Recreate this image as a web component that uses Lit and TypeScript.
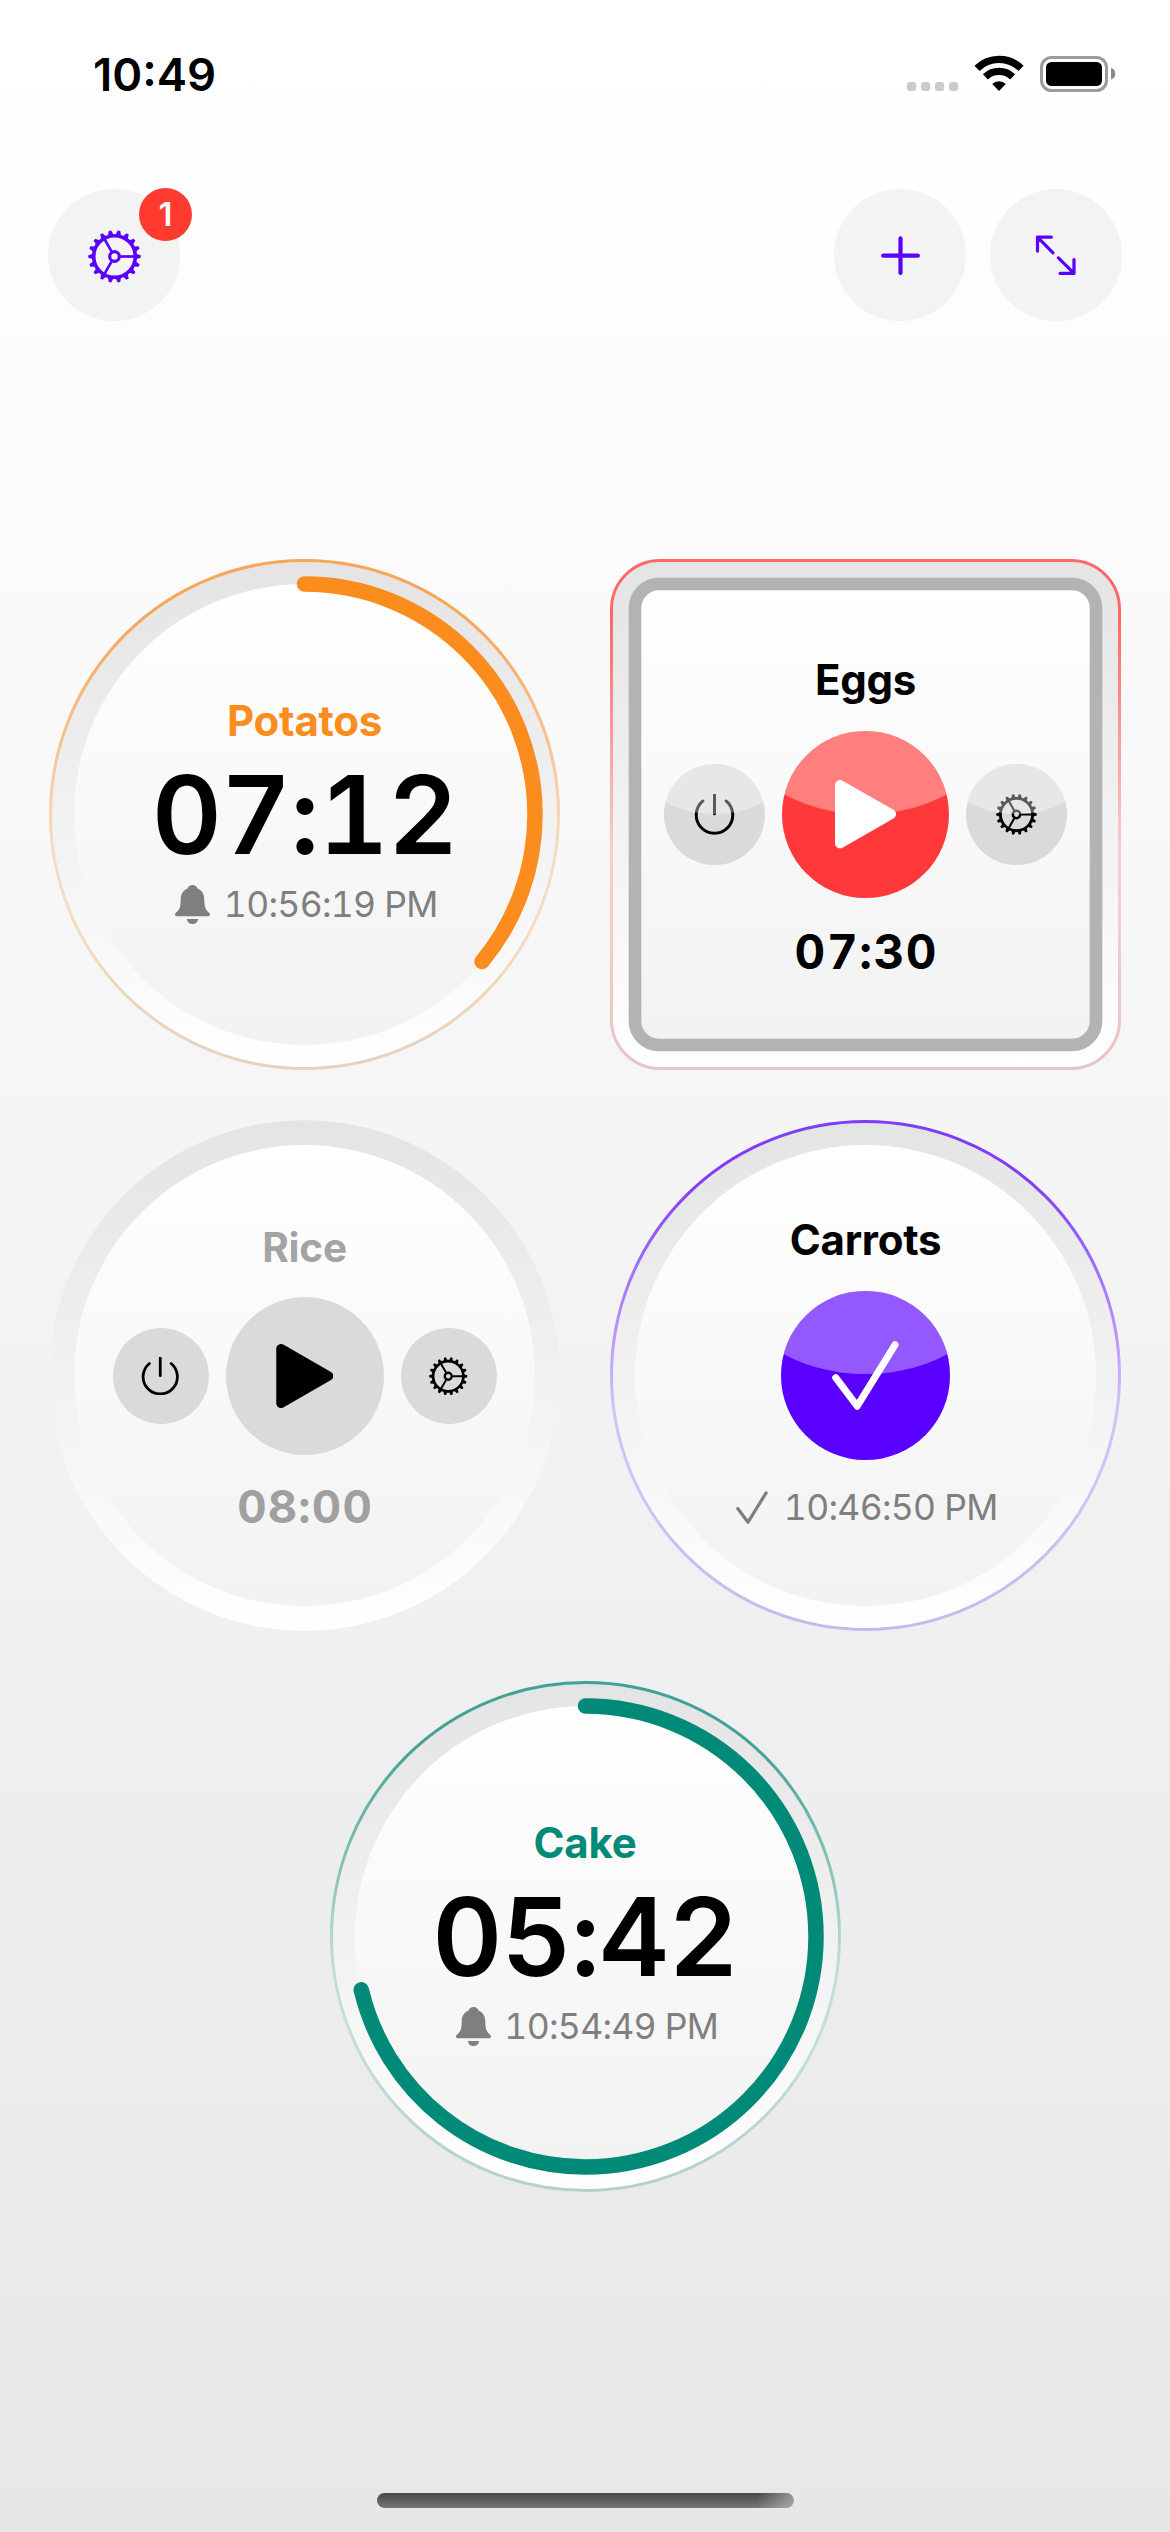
import { LitElement, html, css, svg, nothing } from "lit";
import { customElement, property } from "lit/decorators.js";

type Mode = "running" | "paused" | "idle" | "done";

interface Timer {
  name: string;
  mode: Mode;
  shape: "circle" | "square";
  color?: string;
  rim?: [string, string, string];
  time?: string;
  clock?: string;
  progress?: number;
}

const TIMERS: Timer[] = [
  { name: "Potatos", mode: "running", shape: "circle", color: "#fb8c1e", rim: ["#f9a556", "#f6dcc1", "#e5d1bd"], time: "07:12", clock: "10:56:19 PM", progress: 0.36 },
  { name: "Eggs", mode: "paused", shape: "square", color: "#ff3939", rim: ["#ff6868", "#f6cccc", "#e8c3c3"], time: "07:30" },
  { name: "Rice", mode: "idle", shape: "circle", time: "08:00" },
  { name: "Carrots", mode: "done", shape: "circle", color: "#5900ff", rim: ["#7f3cfa", "#d3c1f9", "#c8b8ea"], clock: "10:46:50 PM" },
  { name: "Cake", mode: "running", shape: "circle", color: "#028a78", rim: ["#40a294", "#c0deda", "#b5d0cc"], time: "05:42", clock: "10:54:49 PM", progress: 0.7125 },
];

const TEETH = Array.from({ length: 18 }, (_, i) => i * 20);

const gearIcon = () => html`<svg class="icon" viewBox="-26.5 -26.5 53 53" fill="none" stroke="currentColor">
  <circle r="20.8" stroke-width="3.6"></circle>
  <circle r="4.8" stroke-width="3.2"></circle>
  ${[0, 120, 240].map((a) => svg`<line x1="6" y1="0" x2="20" y2="0" stroke-width="2.7" transform="rotate(${a})"></line>`)}
  ${TEETH.map((a) => svg`<path d="M21.5-2.8L26.2-1.3V1.3L21.5 2.8Z" fill="currentColor" stroke="none" transform="rotate(${a})"></path>`)}
</svg>`;

const powerIcon = () => html`<svg class="icon" viewBox="-20 -20 40 40" fill="none" stroke="currentColor" stroke-width="2.9" stroke-linecap="round">
  <path d="M-11.3-13.2A17.8 17.8 0 1 0 11.3-13.2M0-18.9V-.6"></path>
</svg>`;

const playIcon = () => html`<svg class="icon" viewBox="0 0 61 68.4">
  <path d="M5 5V63.4L56 34.2Z" fill="currentColor" stroke="currentColor" stroke-width="10" stroke-linejoin="round"></path>
</svg>`;

const checkIcon = (w: number) => html`<svg class="icon" viewBox="0 0 67 69" fill="none" stroke="currentColor" stroke-width=${w} stroke-linecap="round" stroke-linejoin="round">
  <path d="M3.7 36.7L25.2 65.2L63 3.8"></path>
</svg>`;

const bellIcon = () => html`<svg class="icon" viewBox="0 0 35 39" fill="currentColor">
  <path d="M17.5 0C20 0 21.8 1.3 22.4 3.4C27 5.2 29.3 9 29.3 14.5C29.5 21.5 30 24 33.3 27C34.8 28.3 35 29 35 29.800C35 30.7 34.4 31.2 33.4 31.2H1.6C.6 31.2 0 30.7 0 29.8C0 29 .2 28.3 1.7 27C5 24 5.5 21.5 5.7 14.5C5.7 9 8 5.2 12.6 3.4C13.2 1.3 15 0 17.5 0ZM11.8 34H23.2C22.8 37 20.5 39 17.5 39S12.2 37 11.8 34Z"></path>
</svg>`;

@customElement("round-button")
class RoundButton extends LitElement {
  @property({ type: Boolean }) glossy = false;

  static styles = css`
    :host {
      display: block;
      flex: none;
      border-radius: 50%;
      overflow: hidden;
      position: relative;
    }
    .face {
      width: 100%;
      height: 100%;
      display: grid;
      place-items: center;
    }
    .gloss {
      position: absolute;
      width: 150%;
      height: 100%;
      left: -25%;
      top: -50.5%;
      border-radius: 50%;
      background: rgba(255, 255, 255, 0.35);
    }
  `;

  render() {
    return html`<div class="face"><slot></slot></div>
      ${this.glossy ? html`<div class="gloss"></div>` : nothing}`;
  }
}

@customElement("timer-dial")
class TimerDial extends LitElement {
  @property({ attribute: false }) timer!: Timer;

  static styles = css`
    :host {
      display: block;
      width: 511px;
      height: 511px;
    }
    .dial {
      display: grid;
      width: 511px;
      height: 511px;
    }
    .back,
    .content {
      grid-area: 1 / 1;
    }
    .back {
      width: 511px;
      height: 511px;
      display: block;
    }
    .content {
      display: flex;
      flex-direction: column;
      align-items: center;
      z-index: 1;
      white-space: nowrap;
      font-variant-numeric: tabular-nums;
    }
    .name {
      font-weight: 700;
      font-size: 42px;
      line-height: 50px;
      letter-spacing: -0.25px;
    }
    .running {
      padding-top: 137px;
    }
    .running .time {
      font-size: 108.5px;
      font-weight: 600;
      line-height: 108px;
      margin-top: 15px;
      letter-spacing: -0.9px;
    }
    .running .clock {
      margin-top: 15px;
      padding-left: 4px;
    }
    .clock {
      display: flex;
      align-items: center;
      height: 40px;
      color: #7f7f7f;
      font-size: 35.5px;
      line-height: 40px;
      letter-spacing: -0.7px;
    }
    .clock .value {
      padding-top: 2px;
    }
    .clock .bell {
      width: 35px;
      height: 39px;
      margin-right: 13.5px;
    }
    .clock .tick {
      width: 32px;
      height: 33px;
      margin-right: 15.5px;
    }
    .controls {
      display: flex;
      align-items: center;
      gap: 17px;
    }
    .icon {
      display: block;
      width: 100%;
      height: 100%;
    }
    .side {
      background: #dadada;
      color: #000;
    }
    .paused {
      padding-top: 96px;
    }
    .paused .controls {
      margin-top: 26px;
    }
    .paused .main {
      width: 167px;
      height: 167px;
      color: #fff;
    }
    .paused .side {
      width: 101px;
      height: 101px;
    }
    .paused .play {
      width: 61px;
      height: 68.4px;
    }
    .paused .small {
      width: 41px;
      height: 41px;
    }
    .paused .time {
      margin-top: 26px;
      padding-left: 1.8px;
      font-size: 47.5px;
      font-weight: 700;
      line-height: 56px;
      letter-spacing: 1.6px;
    }
    .idle {
      padding-top: 103px;
    }
    .idle .name {
      font-size: 40.5px;
      color: #a4a4a4;
    }
    .idle .controls {
      margin-top: 24px;
    }
    .idle .main {
      width: 158px;
      height: 158px;
      background: #dadada;
      color: #000;
    }
    .idle .side {
      width: 96px;
      height: 96px;
    }
    .idle .play {
      width: 57.6px;
      height: 64px;
    }
    .idle .small {
      width: 38.5px;
      height: 38.5px;
    }
    .idle .time {
      margin-top: 24px;
      padding-left: 1.2px;
      font-size: 45.5px;
      font-weight: 700;
      line-height: 56px;
      letter-spacing: 1.2px;
      color: #a0a0a0;
    }
    .done {
      padding-top: 95px;
    }
    .done .main {
      margin-top: 26px;
      width: 168.5px;
      height: 168.5px;
      color: #fff;
    }
    .done .check {
      width: 67px;
      height: 69px;
    }
    .done .clock {
      margin-top: 27.5px;
      padding-left: 3px;
    }
  `;

  private back() {
    const t = this.timer;
    const len = 2 * Math.PI * 230.5;
    return html`<svg class="back" viewBox="0 0 511 511" fill="none">
      <defs>
        <linearGradient id="ring" x1="0" y1="0" x2="0" y2="1">
          <stop offset="0" stop-color="#e4e4e4"></stop>
          <stop offset=".2" stop-color="#e9e9e9"></stop>
          <stop offset="1" stop-color="#ffffff"></stop>
        </linearGradient>
        <linearGradient id="disc" x1="0" y1="0" x2="0" y2="1">
          <stop offset="0" stop-color="#ffffff"></stop>
          <stop offset="1" stop-color="#f2f2f2"></stop>
        </linearGradient>
        ${t.rim
          ? svg`<linearGradient id="rim" gradientUnits="userSpaceOnUse" x1="0" y1="0" x2="0" y2="511">
              <stop offset="0" stop-color=${t.rim[0]}></stop>
              <stop offset=".12" stop-color=${t.rim[0]}></stop>
              <stop offset=".56" stop-color=${t.rim[1]}></stop>
              <stop offset=".72" stop-color=${t.rim[1]}></stop>
              <stop offset="1" stop-color=${t.rim[2]}></stop>
            </linearGradient>`
          : nothing}
      </defs>
      ${t.shape === "square"
        ? svg`<rect x="1" y="1" width="509" height="509" rx="49" fill="url(#ring)"></rect>
            <rect x="1.5" y="1.5" width="508" height="508" rx="48.5" stroke="url(#rim)" stroke-width="3"></rect>
            <rect x="25" y="25" width="461" height="461" rx="24" fill="url(#disc)" stroke="#b3b3b3" stroke-width="12.6"></rect>`
        : svg`<circle cx="255.5" cy="255.5" r="255.3" fill="url(#ring)"></circle>
            <circle cx="255.5" cy="255.5" r="230.5" fill="url(#disc)"></circle>
            ${t.rim ? svg`<circle cx="255.5" cy="255.5" r="254" stroke="url(#rim)" stroke-width="3"></circle>` : nothing}
            ${t.progress
              ? svg`<circle cx="255.5" cy="255.5" r="230.5" stroke=${t.color} stroke-width="15.5" stroke-linecap="round"
                  stroke-dasharray="${len * t.progress} ${len}" transform="rotate(-90 255.5 255.5)"></circle>`
              : nothing}`}
    </svg>`;
  }

  private controls(glossy: boolean) {
    const t = this.timer;
    return html`<div class="controls">
      <round-button class="side" ?glossy=${glossy}><div class="small">${powerIcon()}</div></round-button>
      <round-button class="main" style=${t.color ? `background:${t.color}` : ""} ?glossy=${glossy}><div class="play">${playIcon()}</div></round-button>
      <round-button class="side" ?glossy=${glossy}><div class="small">${gearIcon()}</div></round-button>
    </div>`;
  }

  private content() {
    const t = this.timer;
    switch (t.mode) {
      case "running":
        return html`<div class="name" style="color:${t.color}">${t.name}</div>
          <div class="time">${t.time}</div>
          <div class="clock"><div class="bell">${bellIcon()}</div><span class="value">${t.clock}</span></div>`;
      case "done":
        return html`<div class="name">${t.name}</div>
          <round-button class="main" style="background:${t.color}" glossy><div class="check">${checkIcon(7)}</div></round-button>
          <div class="clock"><div class="tick">${checkIcon(6.8)}</div><span class="value">${t.clock}</span></div>`;
      default:
        return html`<div class="name">${t.name}</div>
          ${this.controls(t.mode === "paused")}
          <div class="time">${t.time}</div>`;
    }
  }

  render() {
    return html`<div class="dial">
      ${this.back()}
      <div class="content ${this.timer.mode}">${this.content()}</div>
    </div>`;
  }
}

@customElement("app-root")
class AppRoot extends LitElement {
  static styles = css`
    :host {
      display: block;
    }
    .screen {
      box-sizing: border-box;
      width: 1170px;
      height: 2532px;
      display: flex;
      flex-direction: column;
      align-items: center;
      overflow: hidden;
      background: linear-gradient(#ffffff, #fefefe 8%, #e7e7e7);
      color: #000;
      font-family: Inter, "Liberation Sans", sans-serif;
    }
    .status {
      box-sizing: border-box;
      width: 100%;
      height: 189px;
      padding: 47px 54px 0 93px;
      display: flex;
      justify-content: space-between;
      align-items: flex-start;
    }
    .now {
      font-size: 45.5px;
      font-weight: 600;
      line-height: 56px;
      letter-spacing: 0;
    }
    .signals {
      display: block;
      width: 209px;
      height: 38px;
      margin-top: 8px;
    }
    .toolbar {
      box-sizing: border-box;
      width: 100%;
      padding: 0 48px;
      display: flex;
      justify-content: space-between;
    }
    .group {
      display: flex;
      gap: 24px;
    }
    .tool {
      width: 132px;
      height: 132px;
      border-radius: 50%;
      background: #f3f3f3;
      color: #5900ff;
      display: grid;
      place-items: center;
      position: relative;
    }
    .tool .gear {
      width: 53px;
      height: 53px;
      margin-top: 2px;
    }
    .icon {
      display: block;
      width: 100%;
      height: 100%;
    }
    .glyph {
      display: block;
      width: 132px;
      height: 132px;
    }
    .badge {
      position: absolute;
      left: 91px;
      top: -1px;
      width: 53px;
      height: 53px;
      border-radius: 50%;
      background: #ff3b30;
      color: #fff;
      font-size: 33px;
      font-weight: 600;
      line-height: 53px;
      text-align: center;
    }
    .dials {
      display: grid;
      grid-template-columns: 511px 511px;
      gap: 50px;
      margin-top: 238px;
    }
    .dials .last {
      grid-column: 1 / -1;
      justify-self: center;
    }
    .home {
      width: 417px;
      height: 15px;
      margin: auto 0 24px;
      border-radius: 8px;
      background: linear-gradient(100deg, transparent 91%, rgba(190, 190, 190, 0.7) 100%),
        linear-gradient(#474747, #777777);
    }
  `;

  render() {
    return html`<div class="screen">
      <div class="status">
        <div class="now">10:49</div>
        <svg class="signals" viewBox="907 55 209 38">
          ${[907, 921, 935, 949].map((x) => svg`<rect x=${x} y="82" width="9.2" height="9" rx="3" fill="#cbcbcb"></rect>`)}
          <path d="M999 91L992.2 84A9.6 9.6 0 0 1 1005.8 84Z"></path>
          <g fill="none" stroke="#000">
            <path d="M985.4 76.8A19.7 19.7 0 0 1 1012.6 76.8" stroke-width="7.2"></path>
            <path d="M977 68.3A31.5 31.5 0 0 1 1021 68.3" stroke-width="7.4"></path>
            <rect x="1041.5" y="57.5" width="65" height="33" rx="10" stroke="#9b9b9b" stroke-width="3"></rect>
          </g>
          <rect x="1046" y="62" width="56" height="24" rx="5.5"></rect>
          <path d="M1111 68A6 6 0 0 1 1111 79.5Z" fill="#8a8a8a"></path>
        </svg>
      </div>
      <div class="toolbar">
        <div class="tool">
          <div class="gear">${gearIcon()}</div>
          <div class="badge">1</div>
        </div>
        <div class="group">
          <div class="tool">
            <svg class="glyph" viewBox="0 0 132 132" stroke="currentColor" stroke-width="4.2" stroke-linecap="round">
              <path d="M49.2 66.7H83.8M66.5 49.4V84"></path>
            </svg>
          </div>
          <div class="tool">
            <svg class="glyph" viewBox="0 0 132 132" fill="none" stroke="currentColor" stroke-width="3.2" stroke-linecap="round" stroke-linejoin="round">
              <path d="M61.3 48.2H47.5V62.1M47.5 48.2L63 63.8M70.1 84.4H84V70.5M84 84.4L68.4 68.9"></path>
            </svg>
          </div>
        </div>
      </div>
      <div class="dials">
        ${TIMERS.map((t, i) => html`<timer-dial class=${i === TIMERS.length - 1 ? "last" : ""} .timer=${t}></timer-dial>`)}
      </div>
      <div class="home"></div>
    </div>`;
  }
}
